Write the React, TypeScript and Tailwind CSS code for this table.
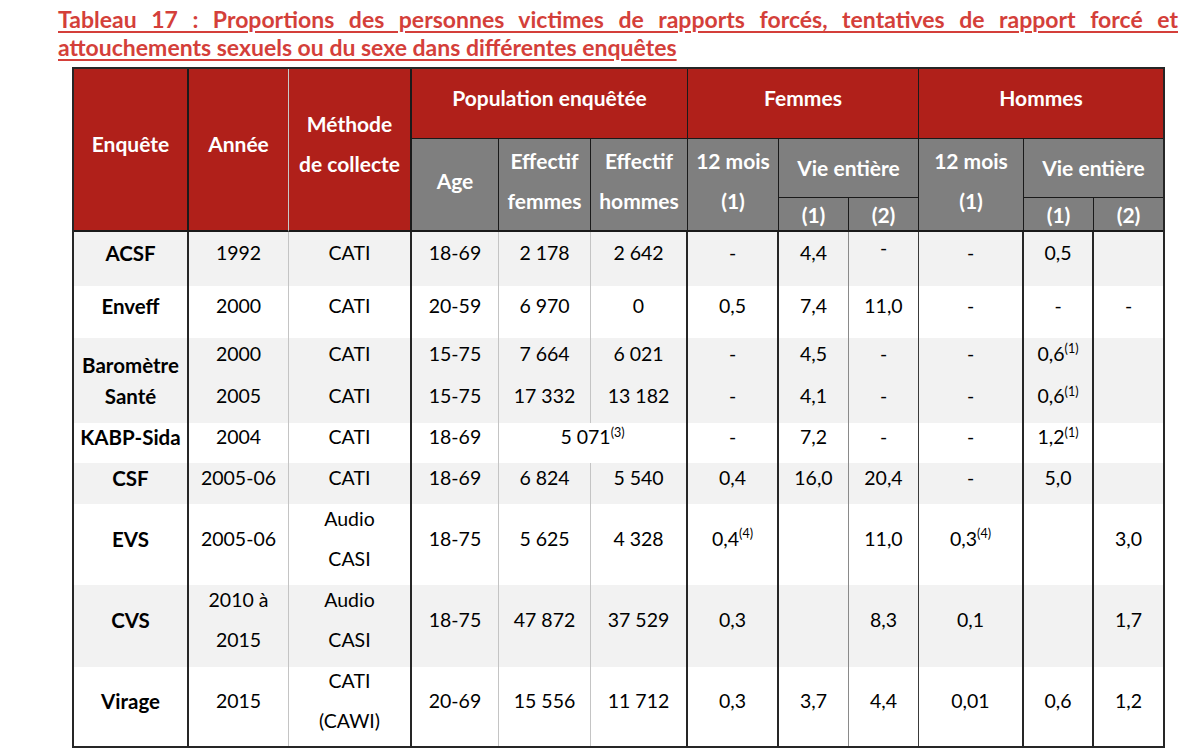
import type { ReactNode } from 'react'

const RED = 'bg-[#b0201a]'
const GREY = 'bg-[#7f7f7f]'

// right border per body column (index 0..11)
const colBorder = [
  'border-r-2 border-r-[#262626]',
  'border-r border-r-[#c4c4c4]',
  'border-r-2 border-r-[#262626]',
  'border-r border-r-[#c4c4c4]',
  'border-r border-r-[#c4c4c4]',
  'border-r-2 border-r-[#262626]',
  'border-r-2 border-r-[#262626]',
  'border-r border-r-[#8a8a8a]',
  'border-r border-r-[#3a3a3a]',
  'border-r-2 border-r-[#262626]',
  'border-r-2 border-r-[#262626]',
  '',
]

function Sup({ n }: { n: number }) {
  return <sup className="text-[12.5px] top-[-0.6em]">({n})</sup>
}

function Td({
  col,
  bg,
  children,
  className = '',
}: {
  col: number
  bg: string
  children?: ReactNode
  className?: string
}) {
  return (
    <div
      className={`${colBorder[col]} ${bg} flex flex-col items-center justify-center pb-[12px] leading-[40px] text-center text-black ${className}`}
    >
      {children}
    </div>
  )
}

function Th({ children, className = '' }: { children: ReactNode; className?: string }) {
  return (
    <div className={`flex flex-col items-center justify-center text-center font-bold text-white text-[21px] leading-[40px] ${className}`}>
      {children}
    </div>
  )
}

type Row = { bg: string; cells: ReactNode[] }

const W = 'bg-white'
const G = 'bg-[#f2f2f2]'

const simpleRows: Row[] = [
  { bg: G, cells: ['ACSF', '1992', 'CATI', '18-69', '2 178', '2 642', '-', '4,4', '-', '-', '0,5', ''] },
  { bg: W, cells: ['Enveff', '2000', 'CATI', '20-59', '6 970', '0', '0,5', '7,4', '11,0', '-', '-', '-'] },
]

const lowerRows: Row[] = [
  { bg: G, cells: ['CSF', '2005-06', 'CATI', '18-69', '6 824', '5 540', '0,4', '16,0', '20,4', '-', '5,0', ''] },
  {
    bg: W,
    cells: [
      'EVS',
      '2005-06',
      ['Audio', 'CASI'],
      '18-75',
      '5 625',
      '4 328',
      <span key="a">0,4<Sup n={4} /></span>,
      '',
      '11,0',
      <span key="b">0,3<Sup n={4} /></span>,
      '',
      '3,0',
    ],
  },
  { bg: G, cells: ['CVS', ['2010 à', '2015'], ['Audio', 'CASI'], '18-75', '47 872', '37 529', '0,3', '', '8,3', '0,1', '', '1,7'] },
  { bg: W, cells: ['Virage', '2015', ['CATI', '(CAWI)'], '20-69', '15 556', '11 712', '0,3', '3,7', '4,4', '0,01', '0,6', '1,2'] },
]

function content(c: ReactNode) {
  if (Array.isArray(c)) return c.map((l, i) => <div key={i}>{l}</div>)
  return <div>{c}</div>
}

function renderRow(r: Row, key: string) {
  return r.cells.map((c, i) => (
    <Td key={`${key}-${i}`} col={i} bg={r.bg} className={i === 0 ? 'font-bold text-[20.5px]' : ''}>
      {content(c)}
    </Td>
  ))
}

export default function App() {
  return (
    <div className="w-[1200px] h-[756px] overflow-hidden bg-white font-['Lato',sans-serif]">
      <div className="pl-[58px] pr-[22px] pt-[5px] text-[23px] font-bold text-[#d43f3a] leading-[28px]">
        <div className="underline decoration-2 underline-offset-[3px] text-justify [text-align-last:justify]">
          Tableau 17 : Proportions des personnes victimes de rapports forcés, tentatives de rapport forcé et
        </div>
        <div className="underline decoration-2 underline-offset-[3px]">
          attouchements sexuels ou du sexe dans différentes enquêtes
        </div>
      </div>

      <div className="mt-[6px] ml-[72px] w-[1093px] border-2 border-[#262626] text-[19.5px]">
        <div className="grid grid-cols-[115px_100px_123px_87px_92px_97px_91px_70px_70px_105px_70px_69px] grid-rows-[70px_59px_34px_54px_52px_43px_42px_40px_41px_81px_82px_79px]">
          {/* header row 1 */}
          <Th className={`${RED} row-span-3 pb-[12px] border-r-2 border-r-[#1a1a1a] border-b-2 border-b-[#1a1a1a]`}>Enquête</Th>
          <Th className={`${RED} row-span-3 pb-[12px] border-r border-r-[#c9c9c9] border-b-2 border-b-[#1a1a1a]`}>Année</Th>
          <Th className={`${RED} row-span-3 pb-[12px] border-r-2 border-r-[#1a1a1a] border-b-2 border-b-[#1a1a1a]`}>
            <div>Méthode</div>
            <div>de collecte</div>
          </Th>
          <Th className={`${RED} col-span-3 pb-[12px] border-r border-r-[#1a1a1a] border-b border-b-[#1a1a1a]`}>Population enquêtée</Th>
          <Th className={`${RED} col-span-3 pb-[12px] border-r border-r-[#1a1a1a] border-b border-b-[#1a1a1a]`}>Femmes</Th>
          <Th className={`${RED} col-span-3 pb-[12px] border-b border-b-[#1a1a1a]`}>Hommes</Th>

          {/* header row 2 */}
          <Th className={`${GREY} row-span-2 pb-[8px] border-r border-r-[#1a1a1a] border-b-2 border-b-[#1a1a1a]`}>Age</Th>
          <Th className={`${GREY} row-span-2 pb-[8px] border-r border-r-[#1a1a1a] border-b-2 border-b-[#1a1a1a]`}>
            <div>Effectif</div>
            <div>femmes</div>
          </Th>
          <Th className={`${GREY} row-span-2 pb-[8px] border-r border-r-[#1a1a1a] border-b-2 border-b-[#1a1a1a]`}>
            <div>Effectif</div>
            <div>hommes</div>
          </Th>
          <Th className={`${GREY} row-span-2 pb-[8px] border-r border-r-[#1a1a1a] border-b-2 border-b-[#1a1a1a]`}>
            <div>12 mois</div>
            <div>(1)</div>
          </Th>
          <Th className={`${GREY} col-span-2 border-r border-r-[#1a1a1a] border-b border-b-[#1a1a1a]`}>Vie entière</Th>
          <Th className={`${GREY} row-span-2 pb-[8px] border-r border-r-[#1a1a1a] border-b-2 border-b-[#1a1a1a]`}>
            <div>12 mois</div>
            <div>(1)</div>
          </Th>
          <Th className={`${GREY} col-span-2 border-b border-b-[#1a1a1a]`}>Vie entière</Th>

          {/* header row 3 */}
          <Th className={`${GREY} pt-[2px] border-r border-r-[#1a1a1a] border-b-2 border-b-[#1a1a1a]`}>(1)</Th>
          <Th className={`${GREY} pt-[2px] border-r border-r-[#1a1a1a] border-b-2 border-b-[#1a1a1a]`}>(2)</Th>
          <Th className={`${GREY} pt-[2px] border-r border-r-[#1a1a1a] border-b-2 border-b-[#1a1a1a]`}>(1)</Th>
          <Th className={`${GREY} pt-[2px] border-b-2 border-b-[#1a1a1a]`}>(2)</Th>

          {/* body */}
          <Td col={0} bg={G} className="font-bold text-[20.5px]"><div>ACSF</div></Td>
          <Td col={1} bg={G}><div>1992</div></Td>
          <Td col={2} bg={G}><div>CATI</div></Td>
          <Td col={3} bg={G}><div>18-69</div></Td>
          <Td col={4} bg={G}><div>2 178</div></Td>
          <Td col={5} bg={G}><div>2 642</div></Td>
          <Td col={6} bg={G}><div>-</div></Td>
          <Td col={7} bg={G}><div>4,4</div></Td>
          <Td col={8} bg={G} className="pb-[22px]"><div>-</div></Td>
          <Td col={9} bg={G}><div>-</div></Td>
          <Td col={10} bg={G}><div>0,5</div></Td>
          <Td col={11} bg={G} />

          {renderRow(simpleRows[1], 'enveff')}

          {/* Baromètre Santé */}
          <Td col={0} bg={G} className="row-span-2 font-bold text-[20.5px] !pb-0 !leading-[31px]">
            <div>Baromètre</div>
            <div>Santé</div>
          </Td>
          {['2000', 'CATI', '15-75', '7 664', '6 021', '-', '4,5', '-', '-'].map((t, i) => (
            <Td key={`b1-${i}`} col={i + 1} bg={G}><div>{t}</div></Td>
          ))}
          <Td col={10} bg={G}><div>0,6<Sup n={1} /></div></Td>
          <Td col={11} bg={G} />
          {['2005', 'CATI', '15-75', '17 332', '13 182', '-', '4,1', '-', '-'].map((t, i) => (
            <Td key={`b2-${i}`} col={i + 1} bg={G}><div>{t}</div></Td>
          ))}
          <Td col={10} bg={G}><div>0,6<Sup n={1} /></div></Td>
          <Td col={11} bg={G} />

          {/* KABP-Sida */}
          <Td col={0} bg={W} className="font-bold text-[20.5px]"><div>KABP-Sida</div></Td>
          <Td col={1} bg={W}><div>2004</div></Td>
          <Td col={2} bg={W}><div>CATI</div></Td>
          <Td col={3} bg={W}><div>18-69</div></Td>
          <Td col={5} bg={W} className="col-span-2"><div>5 071<Sup n={3} /></div></Td>
          <Td col={6} bg={W}><div>-</div></Td>
          <Td col={7} bg={W}><div>7,2</div></Td>
          <Td col={8} bg={W}><div>-</div></Td>
          <Td col={9} bg={W}><div>-</div></Td>
          <Td col={10} bg={W}><div>1,2<Sup n={1} /></div></Td>
          <Td col={11} bg={W} />

          {lowerRows.map((r, i) => renderRow(r, `low-${i}`))}
        </div>
      </div>
    </div>
  )
}
